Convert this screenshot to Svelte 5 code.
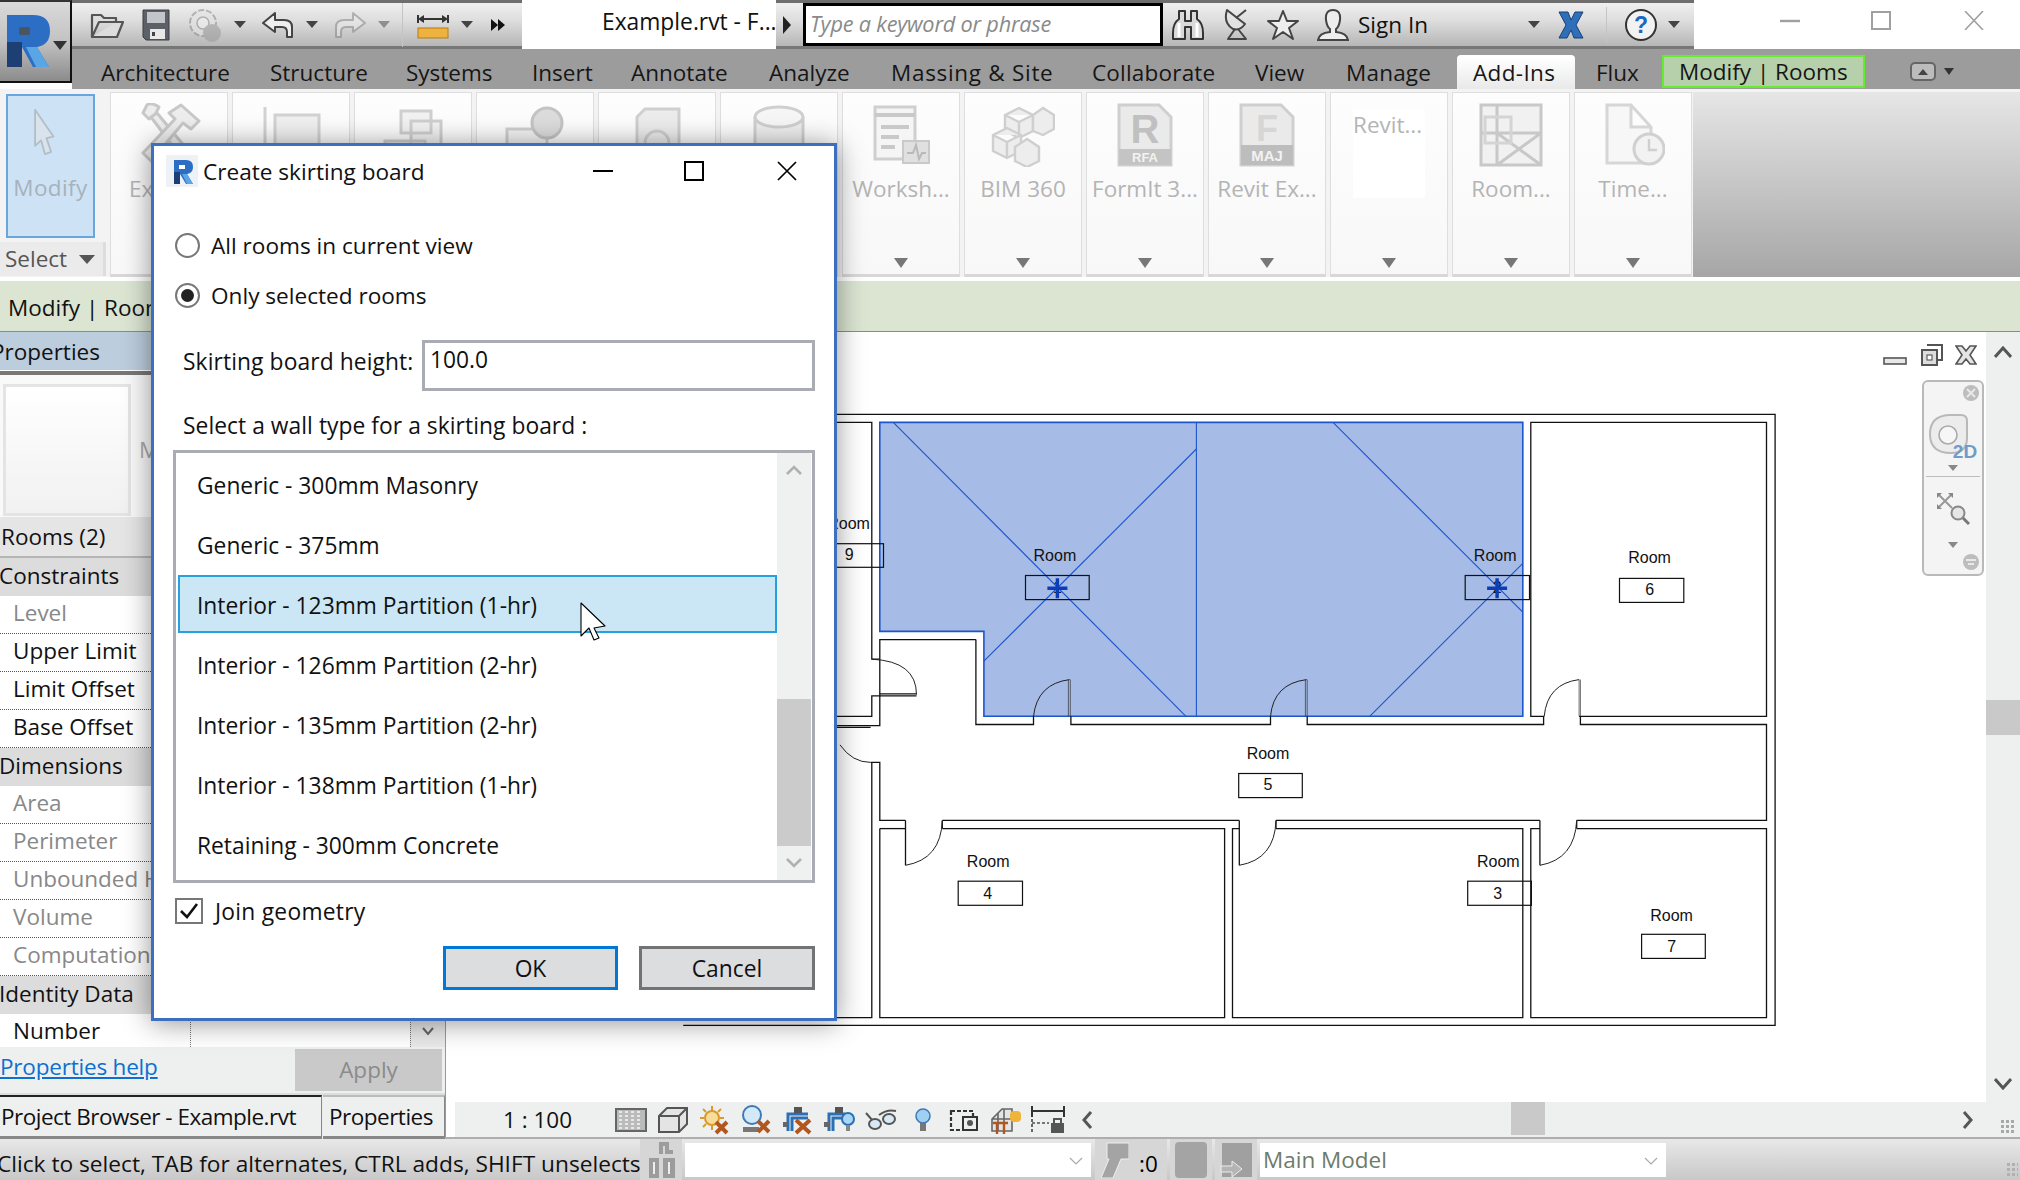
<script>
  const tabs = [
    { label: 'Architecture', w: 169 }, { label: 'Structure', w: 136 }, { label: 'Systems', w: 126 },
    { label: 'Insert', w: 99 }, { label: 'Annotate', w: 138 }, { label: 'Analyze', w: 122 },
    { label: 'Massing & Site', w: 201, tight: .7 }, { label: 'Collaborate', w: 163, tight: .2 }, { label: 'View', w: 91 },
    { label: 'Manage', w: 111, tight: .2 }
  ];
  const props = [
    { t: 'cat', label: 'Constraints' },
    { t: 'ro', label: 'Level' }, { t: 'rw', label: 'Upper Limit' }, { t: 'rw', label: 'Limit Offset' }, { t: 'rw', label: 'Base Offset' },
    { t: 'cat', label: 'Dimensions' },
    { t: 'ro', label: 'Area' }, { t: 'ro', label: 'Perimeter' }, { t: 'ro', label: 'Unbounded Height' }, { t: 'ro', label: 'Volume' }, { t: 'ro', label: 'Computation Height' },
    { t: 'cat', label: 'Identity Data' },
    { t: 'rw', label: 'Number' }
  ];
  const wallTypes = [
    'Generic - 300mm Masonry', 'Generic - 375mm', 'Interior - 123mm Partition (1-hr)',
    'Interior - 126mm Partition (2-hr)', 'Interior - 135mm Partition (2-hr)',
    'Interior - 138mm Partition (1-hr)', 'Retaining - 300mm Concrete'
  ];

  // Plan geometry is measured on a 1568-unit survey of the drawing and mapped to page pixels.
  const X = (v) => +(840 + v / 1.633).toFixed(1);
  const Y = (v) => +(400 + v / 2.45).toFixed(1);
  const line = (...pts) => 'M' + pts.map(([a, b]) => `${X(a)} ${Y(b)}`).join(' L');
  const arc = (x1, y1, cx, cy, x2, y2) => `M${X(x1)} ${Y(y1)} Q${X(cx)} ${Y(cy)} ${X(x2)} ${Y(y2)}`;

  const region = line([65, 55], [1115, 55], [1115, 775], [235, 775], [235, 567], [65, 567]) + ' Z';
  const blue = [
    line([582, 55], [582, 775]), line([87, 55], [565, 775]), line([582, 120], [235, 640]),
    line([805, 55], [1115, 520]), line([1115, 400], [865, 775])
  ];
  const walls = [
    line([-256, 35], [1527, 35], [1527, 1532], [-256, 1532]),
    line([1150, 775], [1128, 775], [1128, 55], [1513, 55], [1513, 775], [1207, 775]),
    line([222, 587], [222, 795], [316, 795], [316, 775]), line([377, 775], [377, 795], [703, 795], [703, 775]),
    line([763, 775], [763, 795], [1149, 795], [1149, 775]), line([1209, 775], [1209, 795], [1513, 795], [1513, 1030], [1203, 1030]),
    line([1143, 1030], [712, 1030]), line([652, 1030], [167, 1030]), line([107, 1030], [65, 1030], [65, 888], [50, 888]),
    line([65, 725], [65, 587], [222, 587]), line([65, 725], [125, 725]), line([65, 720], [125, 720]),
    line([65, 725], [65, 798], [-100, 798]), line([-100, 775], [52, 775], [52, 725], [65, 725]),
    line([-100, 802], [50, 802]),
    line([-100, 55], [52, 55], [52, 635], [65, 635]),
    line([-100, 1513], [52, 1513], [52, 888]),
    line([65, 1050], [107, 1050]), line([167, 1050], [628, 1050], [628, 1513], [65, 1513], [65, 1050]),
    line([652, 1050], [641, 1050], [641, 1513], [1115, 1513], [1115, 1050], [712, 1050]),
    line([1143, 1050], [1128, 1050], [1128, 1513], [1513, 1513], [1513, 1050], [1203, 1050]),
    line([107, 1030], [107, 1140]), line([652, 1030], [652, 1140]), line([1143, 1030], [1143, 1140]),
    line([167, 1030], [167, 1050]), line([712, 1030], [712, 1050]), line([1203, 1030], [1203, 1050])
  ];
  const leaves = [
    line([373, 685], [373, 775]), line([376, 685], [376, 775]), line([760, 685], [760, 775]), line([763, 685], [763, 775]),
    line([1207, 685], [1207, 775]), line([1209, 685], [1209, 775])
  ];
  const arcs = [
    arc(316, 775, 322, 695, 375, 685), arc(703, 775, 708, 695, 762, 685), arc(1150, 775, 1155, 695, 1207, 685),
    arc(52, 635, 125, 640, 125, 722), arc(0, 845, 20, 888, 50, 888),
    arc(107, 1140, 165, 1125, 167, 1030), arc(652, 1140, 710, 1125, 712, 1030), arc(1143, 1140, 1200, 1125, 1203, 1030)
  ];
  const tags = [
    { lx: 351, ly: 383, x1: 303, y1: 430, x2: 407, y2: 489, n: '1', nx: 355, ny: 461, cross: true },
    { lx: 1070, ly: 383, x1: 1021, y1: 430, x2: 1126, y2: 489, n: '2', nx: 1073, ny: 461, cross: true },
    { lx: 1322, ly: 388, x1: 1273, y1: 437, x2: 1378, y2: 496, n: '6', nx: 1322, ny: 465 },
    { lx: 699, ly: 868, x1: 651, y1: 915, x2: 755, y2: 974, n: '5', nx: 699, ny: 942 },
    { lx: 242, ly: 1133, x1: 193, y1: 1179, x2: 298, y2: 1238, n: '4', nx: 241, ny: 1209 },
    { lx: 1075, ly: 1133, x1: 1025, y1: 1179, x2: 1129, y2: 1238, n: '3', nx: 1074, ny: 1209 },
    { lx: 1358, ly: 1263, x1: 1309, y1: 1309, x2: 1413, y2: 1368, n: '7', nx: 1358, ny: 1339 },
    { lx: 14, ly: 303, x1: -33, y1: 352, x2: 71, y2: 410, n: '9', nx: 15, ny: 380 }
  ];
</script>

<div class="app">
  <header class="top">
    <button class="logo" aria-label="Application menu">
      <svg width="70" height="80" viewBox="0 0 70 80">
        <path d="M7 13 H33 Q50 13 50 29 Q50 43 37 45 L49 65 H33 L22 45 V65 H7 Z" fill="#2b6ec4" />
        <path d="M7 40 H22 V65 H7 Z" fill="#1d3f73" />
        <path d="M26 45 H37 L49 65 H36 Z" fill="#5aa5e4" />
        <rect x="19" y="25" width="11" height="8" rx="2" fill="#4a5561" />
        <path d="M53 39 H67 L60 48 Z" fill="#333" />
      </svg>
    </button>

    <div class="titlerow">
      <div class="qat qat-left">
        <svg class="qi first" width="34" height="32" viewBox="0 0 34 32"><path d="M2 28 V6 H11 L14 9 H26 V13 M2 28 H27 L33 13 H9 Z" fill="#ddd" stroke="#555" stroke-width="2.2" stroke-linejoin="round"/></svg>
        <svg class="qi" width="30" height="32" viewBox="0 0 30 32"><path d="M2 1 H28 V31 H5 L2 28 Z" fill="#5c6168" stroke="#3c3f44"/><rect x="6" y="3" width="18" height="11" fill="#c2c6cb"/><rect x="9" y="20" width="15" height="10" fill="#e8e8e8"/><rect x="11" y="23" width="3" height="4" fill="#444"/></svg>
        <svg class="qi" width="34" height="34" viewBox="0 0 34 34" opacity=".55"><circle cx="15" cy="15" r="13" fill="#e4e4e4" stroke="#8a8a8a" stroke-width="2" stroke-dasharray="6 2"/><circle cx="15" cy="15" r="6" fill="#f4f4f4" stroke="#8a8a8a" stroke-width="1.5"/><circle cx="24" cy="25" r="9" fill="#9a9a9a"/></svg>
        <i class="tri qt"></i>
        <svg class="qi undo" width="32" height="26" viewBox="0 0 32 26"><path d="M13 1 L1 11 L13 20 V15 H20 Q25 15 25 20 V25 H30 V15 Q30 8 22 8 H13 Z" fill="#eee" stroke="#444" stroke-width="2" stroke-linejoin="round"/></svg>
        <i class="tri qt"></i>
        <svg class="qi undo" width="32" height="26" viewBox="0 0 32 26" opacity=".45"><path d="M19 1 L31 11 L19 20 V15 H12 Q7 15 7 20 V25 H2 V15 Q2 8 10 8 H19 Z" fill="#eee" stroke="#777" stroke-width="2" stroke-linejoin="round"/></svg>
        <i class="tri qt faded"></i>
        <span class="qsep"></span>
        <svg class="qi measure" width="32" height="30" viewBox="0 0 32 30"><path d="M1 5 V13 M31 5 V13 M3 9 H29" stroke="#333" stroke-width="2" fill="none"/><path d="M1 9 L7 5 V13 Z M31 9 L25 5 V13 Z" fill="#333"/><rect x="1" y="18" width="30" height="10" fill="#eeb23f" stroke="#b77a15"/></svg>
        <i class="tri qt"></i>
        <svg class="more" width="14" height="12" viewBox="0 0 14 12"><path d="M0 0 L7 6 L0 12 Z M7 0 L14 6 L7 12 Z" fill="#111"/></svg>
      </div>

      <div class="doc-title">Example.rvt - F...</div>

      <div class="qat qat-right">
        <span class="doc-arrow"></span>
        <div class="search">Type a keyword or phrase</div>
        <svg class="qi binoc" width="32" height="32" viewBox="0 0 32 32"><path d="M7 2 H13 V12 H19 V2 H25 V10 Q31 14 31 24 V30 H19 V18 H13 V30 H1 V24 Q1 14 7 10 Z" fill="#d9d9d9" stroke="#333" stroke-width="2" stroke-linejoin="round"/><path d="M7 14 V28 M25 14 V28" stroke="#fff" stroke-width="3"/></svg>
        <svg class="qi sat" width="26" height="32" viewBox="0 0 26 32"><path d="M5 1 Q1 14 11 20 Q18 22 23 15 Z" fill="#e2e2e2" stroke="#444" stroke-width="2" stroke-linejoin="round"/><path d="M14 9 L24 1 M13 20 L6 30 H24 L16 20" fill="none" stroke="#444" stroke-width="2" stroke-linejoin="round"/></svg>
        <svg class="qi star" width="32" height="32" viewBox="0 0 32 32"><path d="M16 2 L20 12 L31 12 L22 19 L26 30 L16 23 L6 30 L10 19 L1 12 L12 12 Z" fill="#eee" stroke="#444" stroke-width="2" stroke-linejoin="round"/></svg>
        <svg class="qi person" width="32" height="32" viewBox="0 0 32 32"><path d="M16 1 Q24 1 23 11 Q22 18 19 20 V23 Q30 24 31 31 H1 Q2 24 13 23 V20 Q10 18 9 11 Q8 1 16 1 Z" fill="#eee" stroke="#444" stroke-width="2"/></svg>
        <span class="signin">Sign In</span>
        <i class="tri qt signarrow"></i>
        <svg class="qi xicon" width="30" height="30" viewBox="0 0 30 30"><path d="M3 2 H12 L15 10 L19 2 H27 L20 15 L27 28 H18 L15 20 L11 28 H3 L10 15 Z" fill="#2f6fba" stroke="#1b3f73"/></svg>
        <span class="qsep thin"></span>
        <svg class="qi help" width="34" height="32" viewBox="0 0 34 32"><ellipse cx="17" cy="16" rx="15" ry="15" fill="#f2f2f2" stroke="#333" stroke-width="2"/><text x="17" y="24" text-anchor="middle" font-family="Liberation Sans, sans-serif" font-weight="700" font-size="23" fill="#1e66c0">?</text></svg>
        <i class="tri qt"></i>
      </div>

      <div class="winctl">
        <svg width="20" height="4" viewBox="0 0 20 4" class="w-min"><path d="M0 2 H20" stroke="#a0a0a0" stroke-width="2.4"/></svg>
        <svg width="20" height="19" viewBox="0 0 20 19" class="w-max"><rect x="1" y="1" width="18" height="17" fill="none" stroke="#a0a0a0" stroke-width="2"/></svg>
        <svg width="20" height="19" viewBox="0 0 20 19" class="w-cls"><path d="M1 0 L19 19 M19 0 L1 19" stroke="#a0a0a0" stroke-width="1.6"/></svg>
      </div>
    </div>

    <nav class="tabs">
      {#each tabs as t}
        <span class="tab" style="width:{t.w}px;letter-spacing:{t.tight ?? 0}px">{t.label}</span>
      {/each}
      <span class="tab active">Add-Ins</span>
      <span class="tab flux">Flux</span>
      <span class="tab ctx">Modify | Rooms</span>
      <span class="collapse"><i></i></span>
      <i class="tri collapse-arrow"></i>
    </nav>
  </header>

  <section class="ribbon">
    <div class="select-group">
      <div class="modify-btn">
        <svg width="26" height="46" viewBox="0 0 34 60"><path d="M4 1 L28 36 L19 38 L25 56 L17 59 L12 41 L4 48 Z" fill="#d8e3ec" stroke="#b2bec8" stroke-width="2.4" stroke-linejoin="round"/></svg>
        <span>Modify</span>
      </div>
      <div class="select-strip"><span>Select</span><i class="tri"></i></div>
    </div>

    <div class="panel"><svg class="pi" width="64" height="64" viewBox="0 0 64 64"><g fill="#ededed" stroke="#c8c8c8" stroke-width="3" stroke-linejoin="round"><path d="M10 2 L6 10 L12 16 L18 12 L22 4 Q14 -1 10 2 Z"/><path d="M14 14 L50 62 L58 56 L20 10 Z"/><path d="M32 10 L44 2 L62 18 L54 26 L46 20 L14 58 L6 50 L38 16 Z"/></g></svg><span class="pl hidden-label">Ex</span></div>
    <div class="panel"><svg class="pi" width="64" height="64" viewBox="0 0 64 64"><path d="M6 4 V62 M16 12 H60 V42 H16 Z" fill="#f0f0f0" stroke="#d2d2d2" stroke-width="3"/></svg></div>
    <div class="panel"><svg class="pi" width="64" height="64" viewBox="0 0 64 64"><path d="M20 8 H50 V30 H20 Z M30 18 H60 V48 H30 Z M4 38 H44 V60 H4 Z" fill="#f2f2f2" stroke="#cfcfcf" stroke-width="3"/></svg></div>
    <div class="panel"><svg class="pi" width="64" height="64" viewBox="0 0 64 64"><path d="M4 26 H44 V60 H4 Z" fill="#f4f4f4" stroke="#cfcfcf" stroke-width="3"/><circle cx="44" cy="20" r="15" fill="#dcdcdc" stroke="#c4c4c4" stroke-width="3"/></svg></div>
    <div class="panel"><svg class="pi" width="64" height="64" viewBox="0 0 64 64"><path d="M12 14 L20 6 H54 V62 H12 Z" fill="#ececec" stroke="#cfcfcf" stroke-width="3"/><circle cx="32" cy="40" r="12" fill="none" stroke="#cfcfcf" stroke-width="3"/></svg></div>
    <div class="panel"><svg class="pi" width="64" height="64" viewBox="0 0 64 64"><path d="M8 14 V62 H56 V14" fill="#eee" stroke="#cfcfcf" stroke-width="3"/><ellipse cx="32" cy="14" rx="24" ry="10" fill="#f6f6f6" stroke="#cfcfcf" stroke-width="3"/></svg></div>

    <div class="panel">
      <svg class="pi" width="64" height="64" viewBox="0 0 64 64"><path d="M6 4 H46 V56 H6 Z" fill="#f5f5f5" stroke="#cfcfcf" stroke-width="3"/><path d="M6 12 H46 M12 24 H40 M12 34 H30 M12 44 H26" stroke="#c9c9c9" stroke-width="4"/><rect x="34" y="38" width="26" height="22" fill="#e0e0e0" stroke="#c9c9c9" stroke-width="2"/><path d="M38 50 H44 L47 42 L50 56 L53 50 H57" stroke="#b9b9b9" stroke-width="2" fill="none"/></svg>
      <span class="pl">Worksh...</span><i class="tri pa"></i>
    </div>
    <div class="panel">
      <svg class="pi" width="64" height="64" viewBox="0 0 64 64"><g fill="#ededed" stroke="#cfcfcf" stroke-width="2.4"><path d="M14 12 L28 5 L42 12 V28 L28 35 L14 28 Z M14 12 L28 19 L42 12 M28 19 V35"/><path d="M42 12 L52 5 L63 12 V26 L52 32 L42 28 Z"/><path d="M2 32 L16 25 L30 32 V48 L16 55 L2 48 Z M2 32 L16 39 L30 32 M16 39 V55"/><path d="M24 44 L36 36 L48 44 V58 L36 64 L24 58 Z"/></g></svg>
      <span class="pl">BIM 360</span><i class="tri pa"></i>
    </div>
    <div class="panel">
      <svg class="pi" width="64" height="64" viewBox="0 0 64 64"><path d="M6 2 H46 L58 14 V62 H6 Z" fill="#eaeaea" stroke="#cfcfcf" stroke-width="3"/><rect x="6" y="46" width="52" height="16" fill="#c4c4c4"/><text x="32" y="40" text-anchor="middle" font-family="Liberation Sans, sans-serif" font-weight="700" font-size="40" fill="#c0c0c0">R</text><text x="32" y="59" text-anchor="middle" font-family="Liberation Sans, sans-serif" font-weight="700" font-size="13" fill="#f2f2f2">RFA</text></svg>
      <span class="pl">FormIt 3...</span><i class="tri pa"></i>
    </div>
    <div class="panel">
      <svg class="pi" width="64" height="64" viewBox="0 0 64 64"><path d="M6 2 H46 L58 14 V62 H6 Z" fill="#eaeaea" stroke="#cfcfcf" stroke-width="3"/><rect x="6" y="42" width="52" height="20" fill="#bdbdbd"/><text x="32" y="38" text-anchor="middle" font-family="Liberation Sans, sans-serif" font-weight="700" font-size="36" fill="#d6d6d6">F</text><text x="32" y="58" text-anchor="middle" font-family="Liberation Sans, sans-serif" font-weight="700" font-size="15" fill="#f2f2f2">MAJ</text></svg>
      <span class="pl">Revit Ex...</span><i class="tri pa"></i>
    </div>
    <div class="panel">
      <span class="pl top">Revit...</span><i class="tri pa"></i>
    </div>
    <div class="panel">
      <svg class="pi" width="64" height="64" viewBox="0 0 64 64"><path d="M2 2 H62 V62 H2 Z M2 30 H62 M18 2 V40 M18 30 L62 62 M62 30 L18 62 M18 62 V30" fill="#f1f1f1" stroke="#c8c8c8" stroke-width="3"/><rect x="6" y="14" width="26" height="26" fill="none" stroke="#d4d4d4" stroke-width="3"/></svg>
      <span class="pl">Room...</span><i class="tri pa"></i>
    </div>
    <div class="panel">
      <svg class="pi" width="64" height="64" viewBox="0 0 64 64"><path d="M6 2 H30 L50 24 V60 H6 Z M30 2 V24 H50" fill="#f7f7f7" stroke="#d6d6d6" stroke-width="3"/><circle cx="48" cy="46" r="15" fill="#f2f2f2" stroke="#d0d0d0" stroke-width="3"/><path d="M48 36 V47 H56" stroke="#cfcfcf" stroke-width="2.4" fill="none"/></svg>
      <span class="pl">Time...</span><i class="tri pa"></i>
    </div>
    <div class="ribbon-fill"></div>
  </section>

  <div class="options">Modify | Rooms</div>

  <main class="main">
    <aside class="props">
      <div class="props-head">Properties</div>
      <div class="preview"><div class="preview-box"></div><span class="preview-name">Multiple</span></div>
      <div class="rooms-count">Rooms (2)</div>
      {#each props as r}
        {#if r.t === 'cat'}
          <div class="cat">{r.label}</div>
        {:else}
          <div class="row" class:ro={r.t === 'ro'} class:last={r.label === 'Number'}>
            <span class="name">{r.label}</span>
            <span class="val"></span>
            {#if r.label === 'Number'}<span class="drop"><svg width="12" height="8" viewBox="0 0 12 8"><path d="M1 1 L6 7 L11 1" stroke="#666" stroke-width="2" fill="none"/></svg></span>{/if}
          </div>
        {/if}
      {/each}
      <div class="help-row"><span class="link">Properties help</span><span class="apply">Apply</span></div>
      <div class="bottom-tabs"><span class="btab first-tab">Project Browser - Example.rvt</span><span class="btab second-tab">Properties</span></div>
    </aside>

    <div class="canvas-col">
      <div class="plan">
        <svg width="1531" height="770" viewBox="455 332 1531 770">
          <path d={region} fill="#a6bbe6" stroke="#1c55cc" stroke-width="1.6" />
          {#each blue as d}<path {d} fill="none" stroke="#1c55cc" stroke-width="1.1" />{/each}
          {#each walls as d}<path {d} fill="none" stroke="#111" stroke-width="1.3" />{/each}
          {#each leaves as d}<path {d} fill="none" stroke="#333" stroke-width=".7" />{/each}
          {#each arcs as d}<path {d} fill="none" stroke="#222" stroke-width="1" />{/each}
          {#each tags as t}
            <text class="pt" x={X(t.lx)} y={Y(t.ly) + 5} text-anchor="middle">Room</text>
            <rect x={X(t.x1)} y={Y(t.y1)} width={X(t.x2) - X(t.x1)} height={Y(t.y2) - Y(t.y1)} fill="none" stroke="#111" stroke-width="1.2" />
            <text class="pt" x={X(t.nx)} y={Y(t.ny) + 5} text-anchor="middle">{t.n}</text>
            {#if t.cross}
              <path d="M{X(t.nx) - 10} {Y(t.ny)} H{X(t.nx) + 10} M{X(t.nx)} {Y(t.ny) - 10} V{Y(t.ny) + 10}" stroke="#0c3db8" stroke-width="3.4" />
            {/if}
          {/each}
        </svg>

        <div class="viewctl">
          <svg width="24" height="8" viewBox="0 0 24 8"><rect x="1" y="1" width="22" height="6" fill="#e8e8e8" stroke="#555" stroke-width="1.6"/></svg>
          <svg width="22" height="22" viewBox="0 0 22 22"><path d="M6 1 H21 V16 H16" fill="none" stroke="#555" stroke-width="2"/><rect x="1" y="6" width="15" height="15" fill="#ddd" stroke="#555" stroke-width="2"/><rect x="6" y="11" width="5" height="5" fill="#fff" stroke="#444"/></svg>
          <svg width="22" height="20" viewBox="0 0 22 20"><path d="M1 1 H7 L11 6 L15 1 H21 L15 10 L21 19 H15 L11 14 L7 19 H1 L7 10 Z" fill="#e4e4e4" stroke="#555" stroke-width="1.6"/></svg>
        </div>

        <div class="navbar">
          <svg class="nb-close" width="16" height="16" viewBox="0 0 16 16"><circle cx="8" cy="8" r="8" fill="#bdbdbd"/><path d="M4 4 L12 12 M12 4 L4 12" stroke="#e9e9e9" stroke-width="2"/></svg>
          <svg class="nb-wheel" width="52" height="48" viewBox="0 0 52 48"><path d="M1 20 Q1 2 20 1 H32 Q38 1 38 7 V24 Q38 39 22 39 Q1 39 1 20 Z" fill="#ececec" stroke="#b9b9b9" stroke-width="2"/><circle cx="19" cy="21" r="9" fill="#f6f6f6" stroke="#aaa" stroke-width="1.6"/><text x="36" y="44" text-anchor="middle" font-family="Liberation Sans, sans-serif" font-weight="700" font-size="19" fill="#6f9cc9">2D</text></svg>
          <i class="tri nb-tri"></i>
          <span class="nb-sep"></span>
          <svg class="nb-zoom" width="34" height="34" viewBox="0 0 34 34"><path d="M2 2 L16 16 M2 16 L16 2" stroke="#999" stroke-width="2"/><path d="M1 1 H6 L1 6 Z M17 1 V6 L12 1 Z M1 17 V12 L6 17 Z" fill="#888"/><circle cx="22" cy="21" r="6.5" fill="#e6e6e6" stroke="#888" stroke-width="2"/><path d="M27 26 L33 32" stroke="#777" stroke-width="3"/></svg>
          <i class="tri nb-tri"></i>
          <svg class="nb-min" width="16" height="16" viewBox="0 0 16 16"><circle cx="8" cy="8" r="8" fill="#bdbdbd"/><path d="M3 6 H13 M5 10 H11" stroke="#e9e9e9" stroke-width="2"/></svg>
        </div>
      </div>

      <div class="hstrip">
        <span class="scale">1 : 100</span>
        <div class="vicons">
          <span><svg width="32" height="24" viewBox="0 0 32 24"><rect width="32" height="24" fill="#666"/><rect x="2" y="2" width="28" height="20" fill="#bbb"/><path d="M4 4 H28 M4 8 H28 M4 12 H28 M4 16 H28 M4 20 H28" stroke="#e8e8e8" stroke-dasharray="3 3" stroke-width="2"/></svg></span>
          <span><svg width="32" height="28" viewBox="0 0 32 28"><path d="M2 10 L10 2 H30 V18 L22 26 H2 Z M2 10 H22 V26 M22 10 L30 2" fill="#e4e4e4" stroke="#555" stroke-width="2"/></svg></span>
          <span><svg width="30" height="30" viewBox="0 0 30 30"><circle cx="13" cy="13" r="7" fill="#f7dc9a" stroke="#d99a2b" stroke-width="2"/><path d="M13 1 V5 M13 21 V25 M1 13 H5 M21 13 H25 M4 4 L7 7 M22 4 L19 7 M4 22 L7 19" stroke="#d99a2b" stroke-width="2"/><path d="M17 17 L28 28 M28 17 L17 28" stroke="#b2561f" stroke-width="4"/></svg></span>
          <span><svg width="30" height="30" viewBox="0 0 30 30"><circle cx="11" cy="10" r="9" fill="#d4e9f8" stroke="#3c79b5" stroke-width="2"/><rect x="2" y="22" width="16" height="5" fill="#777"/><path d="M17 16 L28 27 M28 16 L17 27" stroke="#b2561f" stroke-width="4"/></svg></span>
          <span><svg width="32" height="30" viewBox="0 0 32 30"><path d="M6 26 V9 H26 M10 26 V13 H26" fill="none" stroke="#2b6fb5" stroke-width="3"/><rect x="12" y="2" width="8" height="6" fill="#555"/><rect x="1" y="17" width="5" height="5" fill="#666"/><path d="M14 15 L28 28 M28 15 L14 28" stroke="#b2561f" stroke-width="4"/></svg></span>
          <span><svg width="32" height="30" viewBox="0 0 32 30"><path d="M6 26 V9 H22 M10 26 V13 H20" fill="none" stroke="#2b6fb5" stroke-width="3"/><rect x="12" y="2" width="8" height="6" fill="#555"/><rect x="1" y="17" width="5" height="5" fill="#666"/><circle cx="25" cy="14" r="6" fill="#a9d6f5" stroke="#2b6fb5" stroke-width="2"/><rect x="23" y="20" width="4" height="6" fill="#888"/></svg></span>
          <span><svg width="32" height="22" viewBox="0 0 32 22"><path d="M1 4 L8 12 M31 2 Q22 0 14 6" fill="none" stroke="#555" stroke-width="2"/><ellipse cx="10" cy="15" rx="6" ry="5" fill="#d6e9f5" stroke="#555" stroke-width="2"/><ellipse cx="24" cy="10" rx="6" ry="5" fill="#d6e9f5" stroke="#555" stroke-width="2"/></svg></span>
          <span><svg width="16" height="26" viewBox="0 0 16 26"><circle cx="8" cy="9" r="7" fill="#9fd0f2" stroke="#3c79b5" stroke-width="1.5"/><rect x="5" y="16" width="6" height="8" fill="#777"/></svg></span>
          <span><svg width="30" height="28" viewBox="0 0 30 28"><rect x="2" y="5" width="22" height="19" fill="none" stroke="#333" stroke-width="2.2" stroke-dasharray="4 2"/><rect x="14" y="11" width="14" height="13" fill="#eee" stroke="#333" stroke-width="2"/><circle cx="21" cy="17" r="3" fill="#555"/></svg></span>
          <span><svg width="32" height="30" viewBox="0 0 32 30"><path d="M2 14 L12 4 H22 V26 H2 Z M2 14 H22 M8 8 V26 M14 4 V26" fill="#e4e4e4" stroke="#666" stroke-width="1.6"/><path d="M3 18 H18 M7 18 V29 M14 18 V29" stroke="#b2561f" stroke-width="2.4"/><rect x="20" y="6" width="11" height="11" rx="4" fill="#efb43a"/></svg></span>
          <span><svg width="34" height="30" viewBox="0 0 34 30"><path d="M1 1 V12 M33 1 V12 M1 6 H33" stroke="#333" stroke-width="2" fill="none"/><path d="M1 18 H18" stroke="#777" stroke-dasharray="3 2" stroke-width="2"/><path d="M1 14 V28" stroke="#666" stroke-dasharray="3 2" stroke-width="2"/><rect x="20" y="18" width="13" height="10" fill="#555"/><path d="M23 18 V14 H30 V18" stroke="#555" stroke-width="2" fill="none"/></svg></span>
        </div>
        <svg class="h-left" width="12" height="18" viewBox="0 0 12 18"><path d="M10 1 L3 9 L10 17" stroke="#555" stroke-width="3" fill="none"/></svg>
        <span class="h-thumb"></span>
        <svg class="h-right" width="12" height="18" viewBox="0 0 12 18"><path d="M2 1 L9 9 L2 17" stroke="#555" stroke-width="3" fill="none"/></svg>
      </div>
    </div>

    <div class="vscroll">
      <svg class="v-up" width="18" height="12" viewBox="0 0 18 12"><path d="M1 11 L9 2 L17 11" stroke="#555" stroke-width="3" fill="none"/></svg>
      <span class="v-thumb"></span>
      <svg class="v-down" width="18" height="12" viewBox="0 0 18 12"><path d="M1 1 L9 10 L17 1" stroke="#555" stroke-width="3" fill="none"/></svg>
      <span class="grip"></span>
    </div>
  </main>

  <footer class="status">
    <span class="status-text">Click to select, TAB for alternates, CTRL adds, SHIFT unselects.</span>
    <span class="sbox s1"><svg width="32" height="40" viewBox="0 0 32 40"><path d="M14 2 H24 V10 H28 V14 H20 V6 H18 V14 H14 Z M4 18 H14 V38 H4 Z M18 18 H30 V38 H18 Z" fill="#9c9c9c"/><path d="M9 22 V34 M24 22 V34" stroke="#eee" stroke-width="2"/></svg></span>
    <span class="field f1"><svg class="chev" width="14" height="8" viewBox="0 0 14 8"><path d="M1 1 L7 7 L13 1" stroke="#aaa" fill="none" stroke-width="1.2"/></svg></span>
    <span class="sbox s2"><svg width="30" height="36" viewBox="0 0 30 36"><path d="M8 1 H30 V17 H22 L14 36 H2 L10 17 H8 Z" fill="#a4a4a4" stroke="#eee"/></svg><b>:0</b></span>
    <span class="sbox s3"><span class="block"></span></span>
    <span class="sbox s4"><svg width="32" height="36" viewBox="0 0 32 36"><rect x="2" y="1" width="30" height="34" fill="#a0a0a0"/><path d="M1 24 H12 V19 L22 27 L12 35 V30 H1 Z" fill="#b4b4b4" stroke="#eee"/></svg></span>
    <span class="field f2">Main Model<svg class="chev" width="14" height="8" viewBox="0 0 14 8"><path d="M1 1 L7 7 L13 1" stroke="#aaa" fill="none" stroke-width="1.2"/></svg></span>
    <span class="grip2"></span>
  </footer>

  <div class="dialog" role="dialog" aria-label="Create skirting board">
    <div class="d-title">
      <svg width="32" height="32" viewBox="0 0 32 32"><rect width="32" height="32" fill="#eef2f6"/><path d="M8 5 H20 Q27 5 27 12 Q27 18 21 19 L27 29 H20 L14 19 V29 H8 Z" fill="#2b6ec4"/><path d="M8 17 H14 V29 H8 Z" fill="#1d3f73"/><path d="M16 19 H21 L27 29 H21 Z" fill="#5aa5e4"/><rect x="13" y="10" width="6" height="4" fill="#fff"/></svg>
      <span class="d-name">Create skirting board</span>
      <span class="d-ctl">
        <svg width="20" height="4" viewBox="0 0 20 4"><path d="M0 2 H20" stroke="#000" stroke-width="2"/></svg>
        <svg width="20" height="20" viewBox="0 0 20 20"><rect x="1" y="1" width="18" height="18" fill="none" stroke="#000" stroke-width="2"/></svg>
        <svg width="20" height="20" viewBox="0 0 20 20"><path d="M1 1 L19 19 M19 1 L1 19" stroke="#000" stroke-width="1.7"/></svg>
      </span>
    </div>

    <label class="radio first-radio"><span class="dot"></span>All rooms in current view</label>
    <label class="radio"><span class="dot on"></span>Only selected rooms</label>

    <div class="height-row">
      <span class="h-label">Skirting board height:</span>
      <span class="h-input">100.0</span>
    </div>

    <div class="list-label">Select a wall type for a skirting board :</div>

    <div class="list">
      <div class="items">
        {#each wallTypes as w, i}
          <div class="item" class:sel={i === 2}>{w}</div>
        {/each}
      </div>
      <div class="sb">
        <span class="sb-btn"><svg width="16" height="10" viewBox="0 0 16 10"><path d="M1 9 L8 2 L15 9" stroke="#b0b0b0" stroke-width="2.6" fill="none"/></svg></span>
        <span class="sb-space"></span>
        <span class="sb-thumb"></span>
        <span class="sb-btn"><svg width="16" height="10" viewBox="0 0 16 10"><path d="M1 1 L8 8 L15 1" stroke="#b0b0b0" stroke-width="2.6" fill="none"/></svg></span>
      </div>
    </div>

    <label class="check"><span class="box"><svg width="22" height="20" viewBox="0 0 22 20"><path d="M3 10 L9 16 L19 3" stroke="#111" stroke-width="2.6" fill="none"/></svg></span><span class="check-text">Join geometry</span></label>

    <div class="buttons">
      <span class="btn ok">OK</span>
      <span class="btn">Cancel</span>
    </div>

    <svg class="cursor" width="27" height="39" viewBox="-1 -1 27 39"><path d="M0 0 L24 23 L13 25 L18 35 L13 37 L8 25 L0 33 Z" fill="#fff" stroke="#000" stroke-width="1.1" stroke-linejoin="round"/></svg>
  </div>
</div>

<style>
  :global(body) { margin: 0; background: #fff; }
  .app {
    position: relative; width: 2020px; height: 1180px; overflow: hidden;
    display: flex; flex-direction: column;
    font-family: "Open Sans", "Noto Sans", sans-serif; font-size: 22.5px; color: #111;
  }
  i { font-style: normal; }
  .tri { display: inline-block; width: 0; height: 0; border-left: 9px solid transparent; border-right: 9px solid transparent; border-top: 10px solid #555; }

  .top { display: grid; grid-template-columns: 72px 1fr; grid-template-rows: 49px 40px; background: #fff; flex: none; }
  .logo {
    grid-row: 1 / 3; grid-column: 1; height: 83px; width: 72px; padding: 0; box-sizing: border-box; z-index: 2;
    border: 0; border-top: 2px solid #333; border-right: 2px solid #111; border-bottom: 2px solid #111;
    background: linear-gradient(#dadada, #c2c2c2 50%, #8b8b8b);
  }
  .logo svg { display: block; }
  .titlerow { grid-column: 2; display: flex; height: 49px; background: #fff; }
  .qat {
    display: flex; align-items: center; height: 49px; box-sizing: border-box;
    border-top: 3px solid #6e6e6e; border-bottom: 3px solid #777;
    background: linear-gradient(#efefef, #dedede 40%, #b6b6b6);
  }
  .qat-left { width: 450px; flex: none; }
  .qi { flex: none; }
  .first { margin-left: 18px; }
  .qat-left .qi:nth-of-type(2) { margin-left: 17px; }
  .qat-left .qi:nth-of-type(3) { margin-left: 17px; }
  .qt { border-left-width: 6px; border-right-width: 6px; border-top-width: 7px; border-top-color: #444; margin-left: 12px; flex: none; }
  .faded { opacity: .5; }
  .undo { margin-left: 16px; }
  .qsep { width: 1px; height: 44px; background: #c4c4c4; margin-left: 12px; flex: none; }
  .measure { margin-left: 14px; }
  .more { margin-left: 18px; flex: none; }
  .doc-title { width: 254px; flex: none; box-sizing: border-box; padding: 0 0 0 80px; line-height: 44px; white-space: nowrap; font-size: 22.8px; }
  .qat-right { width: 918px; flex: none; }
  .doc-arrow { width: 0; height: 0; margin-left: 7px; border-top: 9px solid transparent; border-bottom: 9px solid transparent; border-left: 8px solid #222; flex: none; }
  .search {
    margin-left: 12px; width: 360px; height: 43px; box-sizing: border-box; flex: none;
    border: 3px solid #000; background: #fff; color: #8a8a8a; font-style: italic; font-size: 21.7px;
    line-height: 35px; padding-left: 4px; letter-spacing: -.2px; white-space: nowrap; overflow: hidden;
  }
  .binoc { margin-left: 9px; }
  .sat { margin-left: 18px; }
  .star { margin-left: 19px; }
  .person { margin-left: 18px; }
  .signin { margin-left: 9px; width: 170px; flex: none; }
  .signarrow { margin-left: 0; }
  .xicon { margin-left: 16px; }
  .thin { margin-left: 20px; height: 36px; }
  .help { margin-left: 17px; }
  .help + .qt { margin-left: 10px; }
  .winctl { flex: 1; display: flex; align-items: flex-start; padding-left: 86px; }
  .w-min { margin-top: 19px; }
  .w-max { margin: 11px 0 0 71px; }
  .w-cls { margin: 11px 0 0 73px; }

  .tabs { grid-column: 2; display: flex; align-items: flex-end; height: 40px; background: #9c9c9c; padding-left: 29px; box-sizing: border-box; }
  .tab { flex: none; line-height: 35px; height: 34px; white-space: nowrap; color: #161616; }
  .tab.active {
    box-sizing: border-box; width: 118px; padding-left: 16px; height: 34px; margin-right: 21px; line-height: 31px; letter-spacing: .35px;
    background: linear-gradient(#fff, #e9e9e9); border-top: 2px solid #fff; border-radius: 4px 4px 0 0;
  }
  .tab.flux { width: 66px; }
  .tab.ctx {
    box-sizing: border-box; width: 203px; padding-left: 15px; height: 33px; margin-bottom: 1px; line-height: 30px;
    background: #b6d0ac; border: 2px solid #66ec2e;
  }
  .collapse { margin: 0 0 8px 45px; width: 26px; height: 19px; border: 2px solid #666; border-radius: 5px; background: #bcbcbc; box-sizing: border-box; display: flex; align-items: center; justify-content: center; }
  .collapse i { width: 0; height: 0; border-left: 5px solid transparent; border-right: 5px solid transparent; border-bottom: 6px solid #444; }
  .collapse-arrow { border-left-width: 5px; border-right-width: 5px; border-top-width: 7px; border-top-color: #333; margin: 0 0 14px 8px; }

  .ribbon { display: flex; height: 188px; flex: none; background: #f3f3f3; box-sizing: border-box; padding-top: 3px; gap: 4px; }
  .select-group { width: 106px; flex: none; display: flex; flex-direction: column; }
  .modify-btn {
    box-sizing: border-box; width: 89px; height: 144px; margin: 2px 0 0 6px; background: #cde3f5; border: 2px solid #6aa6de;
    display: flex; flex-direction: column; align-items: center; color: #a6b2bb;
  }
  .modify-btn svg { margin-top: 13px; margin-left: -12px; }
  .modify-btn span { margin-top: 17px; letter-spacing: .4px; }
  .select-strip { margin-top: 4px; height: 34px; background: #ebebeb; color: #555; line-height: 36px; padding-left: 5px; border-right: 3px solid #ddd; width: 106px; box-sizing: border-box; display: flex; align-items: center; white-space: nowrap; }
  .select-strip .tri { margin-left: 12px; flex: none; border-left-width: 8px; border-right-width: 8px; border-top-width: 9px; }
  .panel {
    width: 118px; flex: none; box-sizing: border-box; height: 185px; position: relative;
    background: linear-gradient(#fdfdfd, #f8f8f8); border: 1px solid #dedede; border-bottom: 3px solid #d8d8d8;
    display: flex; flex-direction: column; align-items: center; color: #b4b4b4;
  }
  .pi { margin-top: 10px; flex: none; }
  .pl { margin-top: 6px; white-space: nowrap; }
  .hidden-label { align-self: flex-start; margin-left: 18px; }
  .pl.top { margin-top: 16px; }
  .pa { position: absolute; bottom: 6px; left: 50%; margin-left: -7px; border-left-width: 7px; border-right-width: 7px; border-top-width: 10px; border-top-color: #777; }
  .ribbon-fill { flex: 1; background: linear-gradient(#e6e6e6, #a6a6a6); margin-left: -3px; }

  .options { flex: none; margin-top: 4px; height: 51px; box-sizing: border-box; border-bottom: 1px solid #8b8b8b; background: #dbe5d2; padding-left: 8px; line-height: 54px; }

  .main { flex: none; height: 805px; display: flex; background: #fff; border-bottom: 2px solid #aeaeae; box-sizing: content-box; }
  .props { width: 445px; flex: none; margin-right: 9px; border-right: 1px solid #999; box-sizing: content-box; display: flex; flex-direction: column; background: #fff; }
  .props-head { height: 38px; background: #bccddd; line-height: 40px; text-indent: -9px; flex: none; border-bottom: 1px solid #fff; overflow: hidden; }
  .preview { height: 146px; flex: none; box-sizing: border-box; border-top: 4px solid #777; padding: 9px 0 0 3px; background: #f9f9f9; display: flex; align-items: flex-start; }
  .preview-box { width: 128px; height: 132px; border: 3px solid #e4e4e4; background: linear-gradient(#fff, #f1f1f1); flex: none; box-sizing: border-box; }
  .preview-name { margin: 50px 0 0 8px; color: #aaa; }
  .rooms-count { height: 41px; flex: none; box-sizing: border-box; background: #e5e5e5; line-height: 40px; border-bottom: 2px solid #b5b5b5; padding-left: 1px; }
  .cat { height: 38px; flex: none; background: #dcdcdc; line-height: 35px; text-indent: -1px; }
  .row { height: 38px; flex: none; display: flex; box-sizing: border-box; border-bottom: 1px dotted #555; background: #fff; }
  .row.last { height: 33px; border-bottom: 0; }
  .name { width: 191px; box-sizing: border-box; padding-left: 13px; line-height: 33px; white-space: nowrap; overflow: hidden; border-right: 1px dotted #777; flex: none; }
  .ro .name { color: #888; }
  .val { flex: 1; }
  .drop { width: 34px; border-left: 1px dotted #777; display: flex; align-items: center; justify-content: center; background: #e9e9e9; margin-left: 24px; }
  .help-row { flex: none; height: 46px; background: #eef0ef; display: flex; align-items: center; justify-content: space-between; padding-right: 3px; }
  .link { color: #0f6fd1; text-decoration: underline; margin-top: -8px; letter-spacing: -.2px; }
  .apply { width: 147px; height: 42px; background: #c9c9c9; color: #8b8b8b; text-align: center; line-height: 42px; }
  .bottom-tabs { flex: 1; display: flex; background: #e8eaea; border-top: 2px solid #ddd; align-items: stretch; }
  .btab { box-sizing: border-box; background: #eef0ef; line-height: 39px; white-space: nowrap; border-bottom: 3px solid #888; letter-spacing: -.5px; }
  .first-tab { width: 322px; border-top: 2px solid #222; border-right: 1px solid #888; padding-left: 1px; }
  .second-tab { width: 122px; margin-left: 1px; padding-left: 6px; border-right: 1px solid #888; border-top: 2px solid #bbb; }

  .canvas-col { width: 1531px; flex: none; display: flex; flex-direction: column; }
  .plan { position: relative; height: 770px; flex: none; overflow: hidden; background: #fff; }
  .plan svg { display: block; }
  .pt { font-family: "Liberation Sans", Arial, sans-serif; font-size: 16px; fill: #111; }
  .viewctl { position: absolute; left: 1428px; top: 12px; display: flex; gap: 12px; align-items: center; }
  .viewctl svg:first-child { margin-top: 12px; margin-right: 2px; }
  .navbar {
    position: absolute; left: 1467px; top: 48px; width: 62px; height: 196px; box-sizing: border-box;
    border: 2px solid #b9b9b9; border-radius: 6px; background: #f4f4f4;
    display: flex; flex-direction: column; align-items: center;
  }
  .nb-close { position: absolute; top: 3px; right: 3px; }
  .nb-min { position: absolute; bottom: 4px; right: 3px; }
  .nb-wheel { margin-top: 32px; margin-left: 4px; }
  .nb-tri { border-left-width: 5px; border-right-width: 5px; border-top-width: 6px; border-top-color: #888; margin-top: 3px; }
  .nb-sep { width: 54px; height: 1px; background: #bdbdbd; margin-top: 5px; }
  .nb-zoom { margin-top: 15px; }
  .nb-zoom + .nb-tri { margin-top: 16px; }
  .hstrip { height: 35px; flex: none; background: #eef0ef; display: flex; align-items: center; position: relative; }
  .scale { margin-left: 48px; width: 107px; flex: none; white-space: nowrap; }
  .vicons { display: flex; width: 460px; flex: none; }
  .vicons span { width: 41.7px; flex: none; display: flex; align-items: center; justify-content: center; }
  .h-left { margin-left: 11px; flex: none; }
  .h-thumb { width: 34px; height: 33px; background: #c9c9c9; margin-left: 418px; flex: none; align-self: flex-start; }
  .h-right { margin-left: 417px; flex: none; }

  .vscroll { flex: 1; background: #eef0ef; display: flex; flex-direction: column; align-items: center; position: relative; }
  .v-up { margin: 14px 0 0 0; }
  .v-thumb { width: 100%; height: 35px; background: #c9c9c9; margin-top: 342px; }
  .v-down { margin-top: 343px; }
  .grip { position: absolute; right: 4px; bottom: 2px; width: 16px; height: 16px; background: radial-gradient(circle, #a8a8a8 45%, transparent 50%) 0 0 / 5px 5px; }

  .status { flex: 1; display: flex; align-items: center; background: linear-gradient(#e8e8e8, #c8c8c8); position: relative; min-height: 0; overflow: hidden; }
  .status-text { width: 640px; flex: none; overflow: hidden; white-space: nowrap; text-indent: -3px; font-size: 22.7px; padding-top: 8px; }
  .sbox { height: 41px; background: #d6d6d6; display: flex; align-items: center; justify-content: center; flex: none; }
  .s1 { width: 42px; margin-right: 3px; }
  .field { background: #fff; height: 34px; box-sizing: border-box; flex: none; position: relative; line-height: 34px; color: #6d7c6a; padding-left: 3px; white-space: nowrap; }
  .chev { position: absolute; right: 8px; top: 14px; }
  .f1 { width: 406px; margin-right: 4px; }
  .s2 { width: 72px; margin-right: 3px; justify-content: flex-start; padding-left: 4px; box-sizing: border-box; }
  .s2 b { font-weight: 400; margin: 8px 0 0 10px; color: #000; }
  .s3 { width: 42px; margin-right: 3px; }
  .block { width: 32px; height: 36px; background: #a4a4a4; border-radius: 4px; }
  .s4 { width: 42px; margin-right: 3px; }
  .f2 { width: 406px; }
  .grip2 { position: absolute; right: 2px; bottom: 2px; width: 12px; height: 16px; background: radial-gradient(circle, #b0b0b0 45%, transparent 50%) 0 0 / 5px 5px; }

  .dialog {
    position: absolute; left: 151px; top: 143px; width: 686px; height: 878px; box-sizing: border-box;
    border: 3px solid #3d6fc0; background: #fff; box-shadow: 0 2px 26px rgba(0, 0, 0, .42);
    display: flex; flex-direction: column; padding: 0 19px 0 19px; font-size: 22.8px;
  }
  .d-title { height: 60px; flex: none; box-sizing: border-box; padding-bottom: 10px; display: flex; align-items: center; margin-left: -7px; font-size: 22.6px; }
  .d-name { margin-left: 5px; white-space: nowrap; }
  .d-ctl { margin-left: auto; display: flex; align-items: center; margin-right: 18px; }
  .d-ctl svg:nth-child(2) { margin: 0 73px 0 71px; }
  .radio { height: 50px; flex: none; display: flex; align-items: center; white-space: nowrap; font-size: 22.6px; }
  .first-radio { margin-top: 14px; }
  .dot { width: 25px; height: 25px; box-sizing: border-box; border: 2px solid #777; border-radius: 50%; margin: 0 11px 0 2px; flex: none; position: relative; background: #fff; }
  .dot.on::after { content: ""; position: absolute; inset: 4px; border-radius: 50%; background: #222; }
  .height-row { margin-top: 20px; height: 51px; flex: none; display: flex; align-items: center; padding-left: 10px; }
  .h-label { width: 239px; flex: none; white-space: nowrap; padding-bottom: 8px; letter-spacing: .1px; }
  .h-input { flex: 1; height: 51px; box-sizing: border-box; border: 3px solid #a9adb3; padding-left: 5px; line-height: 33px; }
  .list-label { margin-top: 20px; height: 30px; line-height: 29px; flex: none; padding-left: 10px; white-space: nowrap; letter-spacing: .05px; }
  .list { margin-top: 9px; height: 433px; flex: none; box-sizing: border-box; border: 3px solid #a9adb3; display: flex; }
  .items { flex: 1; padding: 2px 0 0 2px; }
  .item { height: 58px; margin-bottom: 2px; box-sizing: border-box; padding-left: 17px; line-height: 57px; border: 2px solid transparent; white-space: nowrap; }
  .item.sel { background: #cbe7f6; border-color: #27a0de; }
  .sb { width: 34px; flex: none; display: flex; flex-direction: column; background: #eff0f0; margin-right: 1px; }
  .sb-btn { height: 34px; display: flex; align-items: center; justify-content: center; flex: none; }
  .sb-space { flex: 1; }
  .sb-thumb { height: 147px; background: #cbcbcb; flex: none; }
  .check { margin-top: 15px; height: 26px; flex: none; display: flex; align-items: center; white-space: nowrap; }
  .check-text { letter-spacing: .25px; }
  .box { width: 28px; height: 26px; box-sizing: border-box; border: 2px solid #777; margin: 0 12px 0 2px; display: flex; align-items: center; justify-content: center; }
  .buttons { margin-top: 22px; display: flex; justify-content: flex-end; gap: 21px; flex: none; }
  .btn { width: 176px; height: 44px; box-sizing: border-box; border: 3px solid #737373; background: #dcddde; text-align: center; line-height: 40px; }
  .btn.ok { border-color: #0078d7; width: 175px; }
  .cursor { position: absolute; left: 426px; top: 456px; }
</style>
